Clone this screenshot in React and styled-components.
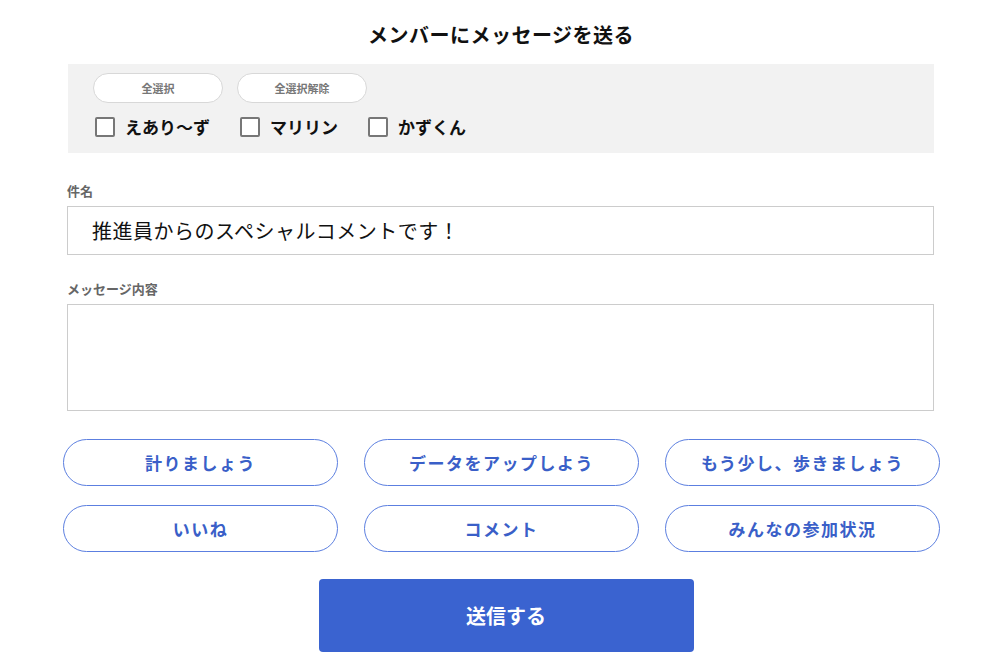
import React from "react"
import styled, { createGlobalStyle } from "styled-components"

const Global = createGlobalStyle`
  body {
    margin: 0;
    font-family: "Noto Sans CJK JP", "Noto Sans", sans-serif;
    background: #fff;
    color: #111;
  }
`

const Page = styled.div`
  width: 866px;
  margin: 0 auto;
  padding: 18px 0 0 1px;
  display: flex;
  flex-direction: column;
`

const Title = styled.h1`
  margin: 0 0 12px;
  font-size: 20px;
  font-weight: 700;
  line-height: 34px;
  text-align: center;
  letter-spacing: 0.5px;
`

const Panel = styled.div`
  background: #f2f2f2;
  padding: 9px 25px 10px;
  height: 89px;
  box-sizing: border-box;
  display: flex;
  flex-direction: column;
  gap: 11px;
`

const Row = styled.div`
  display: flex;
  gap: ${(p) => p.gap || 14}px;
  align-items: center;
`

const SmallBtn = styled.button`
  width: 130px;
  height: 30px;
  border-radius: 15px;
  border: 1px solid #d8d8d8;
  background: #fff;
  font-family: inherit;
  font-size: 11px;
  font-weight: 700;
  color: #777;
`

const Check = styled.label`
  display: flex;
  align-items: center;
  gap: 10px;
  font-size: 17px;
  font-weight: 700;
  margin-left: 2px;
`

const Box = styled.span`
  width: 16px;
  height: 16px;
  border: 2px solid #777;
  border-radius: 2px;
  background: #fff;
`

const Label = styled.div`
  font-size: 13px;
  font-weight: 700;
  color: #666;
  margin: ${(p) => p.top}px 0 6px -1px;
`

const Input = styled.div`
  margin-left: -1px;
  height: 49px;
  box-sizing: border-box;
  border: 1px solid #ccc;
  padding: 0 24px;
  display: flex;
  align-items: center;
  font-size: 20px;
  letter-spacing: 0.5px;
`

const Area = styled.div`
  margin-left: -1px;
  height: 107px;
  box-sizing: border-box;
  border: 1px solid #ccc;
`

const Grid = styled.div`
  width: 876px;
  margin: 28px 0 0 -5px;
  display: grid;
  grid-template-columns: repeat(3, 275px);
  column-gap: 26px;
  row-gap: 19px;
`

const Pill = styled.button`
  height: 47px;
  border-radius: 24px;
  border: 1.5px solid #5c7fe0;
  background: #fff;
  color: #3a5fc8;
  font-family: inherit;
  font-size: 17px;
  font-weight: 700;
  letter-spacing: 1.5px;
`

const Send = styled.button`
  align-self: center;
  margin: 27px 0 0 10px;
  width: 375px;
  height: 73px;
  border: none;
  border-radius: 4px;
  background: #3a63d0;
  color: #fff;
  font-family: inherit;
  font-size: 20px;
  font-weight: 700;
`

const quick = ["計りましょう", "データをアップしよう", "もう少し、歩きましょう", "いいね", "コメント", "みんなの参加状況"]

export default function App() {
  return (
    <>
      <Global />
      <Page>
        <Title>メンバーにメッセージを送る</Title>
        <Panel>
          <Row>
            <SmallBtn>全選択</SmallBtn>
            <SmallBtn>全選択解除</SmallBtn>
          </Row>
          <Row gap={28}>
            {["えあり〜ず", "マリリン", "かずくん"].map((n) => (
              <Check key={n}>
                <Box />
                {n}
              </Check>
            ))}
          </Row>
        </Panel>
        <Label top={28}>件名</Label>
        <Input>推進員からのスペシャルコメントです！</Input>
        <Label top={24}>メッセージ内容</Label>
        <Area />
        <Grid>
          {quick.map((q) => (
            <Pill key={q}>{q}</Pill>
          ))}
        </Grid>
        <Send>送信する</Send>
      </Page>
    </>
  )
}
